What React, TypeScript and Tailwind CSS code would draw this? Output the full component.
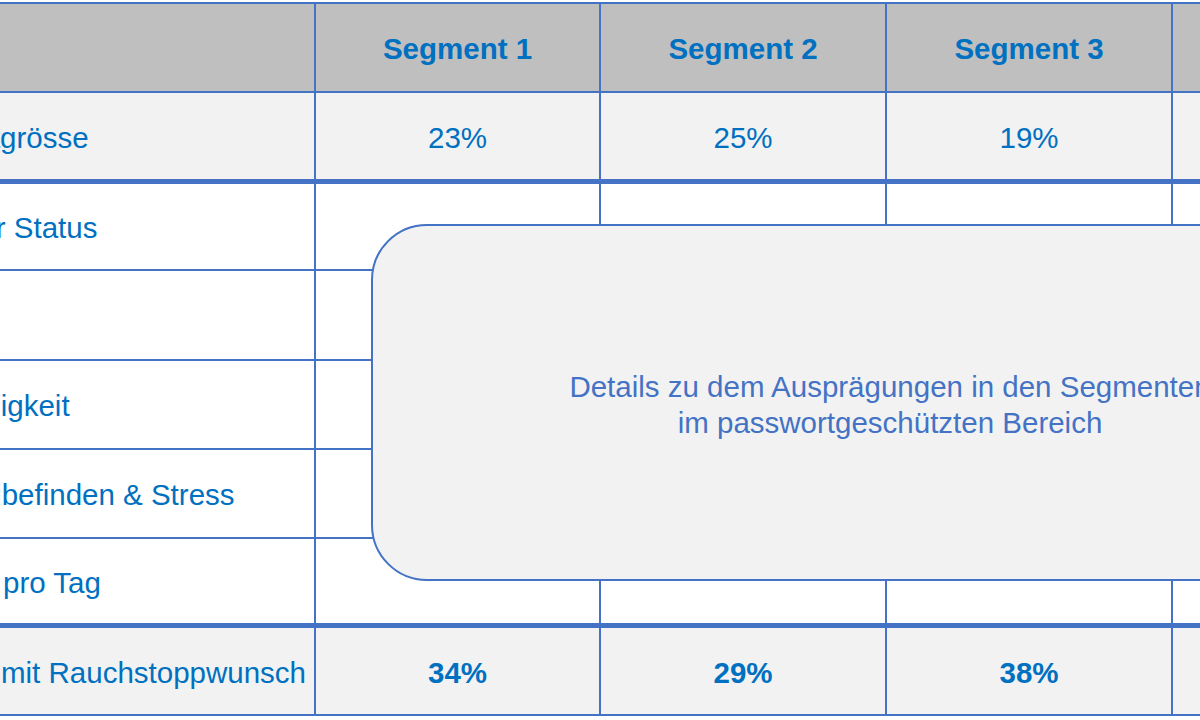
const segments = ['Segment 1', 'Segment 2', 'Segment 3', 'Segment 4'];

const rows = [
  { label: 'Segmentgrösse', indent: 'pl-[32px]', row: 'h-[91px] border-b-[5px] bg-[#f2f2f2]', values: ['23%', '25%', '19%', '33%'], bold: false },
  { label: 'Sozialer Status', indent: 'pl-[49px]', row: 'h-[87px] border-b-2 bg-white', values: ['', '', '', ''], bold: false },
  { label: 'Alter', indent: 'pl-[49px]', row: 'h-[90px] border-b-2 bg-white', values: ['', '', '', ''], bold: false },
  { label: 'Abhängigkeit', indent: 'pl-[49px]', row: 'h-[89px] border-b-2 bg-white', values: ['', '', '', ''], bold: false },
  { label: 'Wohlbefinden & Stress', indent: 'pl-[85px]', row: 'h-[89px] border-b-2 bg-white', values: ['', '', '', ''], bold: false },
  { label: 'Zigaretten pro Tag', indent: 'pl-[12px]', row: 'h-[89px] border-b-[5px] bg-white', values: ['', '', '', ''], bold: false },
  { label: 'Anteil mit Rauchstoppwunsch', indent: 'pl-[69px]', row: 'h-[88px] border-b-2 bg-[#f2f2f2]', values: ['34%', '29%', '38%', '27%'], bold: true },
];

const App = () => {
  return (
    <div className="relative w-[1200px] h-[720px] overflow-hidden bg-white font-['Liberation_Sans',Arial,sans-serif] text-[29.5px] text-[#0070c0]">
      {/* Table */}
      <div className="mt-[2px] ml-[-150px] w-max border-t-2 border-[#4472c4]">
        {/* Header */}
        <div className="flex h-[89px] border-b-2 border-[#4472c4] bg-[#bfbfbf]">
          <div className="w-[466px] border-r-2 border-[#4472c4]" />
          {segments.map((s, i) => (
            <div
              key={s}
              className={`${i === 0 ? 'w-[285px]' : 'w-[286px]'} flex items-center justify-center pt-[4px] border-r-2 border-[#4472c4] font-bold`}
            >
              {s}
            </div>
          ))}
        </div>

        {rows.map((r) => (
          <div key={r.label} className={`flex border-[#4472c4] ${r.row}`}>
            <div className={`w-[466px] flex items-center pt-[4px] whitespace-nowrap border-r-2 border-[#4472c4] ${r.indent}`}>
              {r.label}
            </div>
            {r.values.map((v, i) => (
              <div
                key={i}
                className={`${i === 0 ? 'w-[285px]' : 'w-[286px]'} flex items-center justify-center pt-[4px] border-r-2 border-[#4472c4] ${r.bold ? 'font-bold' : ''}`}
              >
                {v}
              </div>
            ))}
          </div>
        ))}
      </div>

      {/* Locked overlay */}
      <div className="absolute left-[371px] top-[224px] w-[1038px] h-[357px] rounded-[56px] border-2 border-[#4472c4] bg-[#f2f2f2] flex items-center justify-center pt-[4px] text-center leading-[36px] text-[#4472c4]">
        <p>
          Details zu dem Ausprägungen in den Segmenten
          <br />
          im passwortgeschützten Bereich
        </p>
      </div>
    </div>
  );
};

export default App;
